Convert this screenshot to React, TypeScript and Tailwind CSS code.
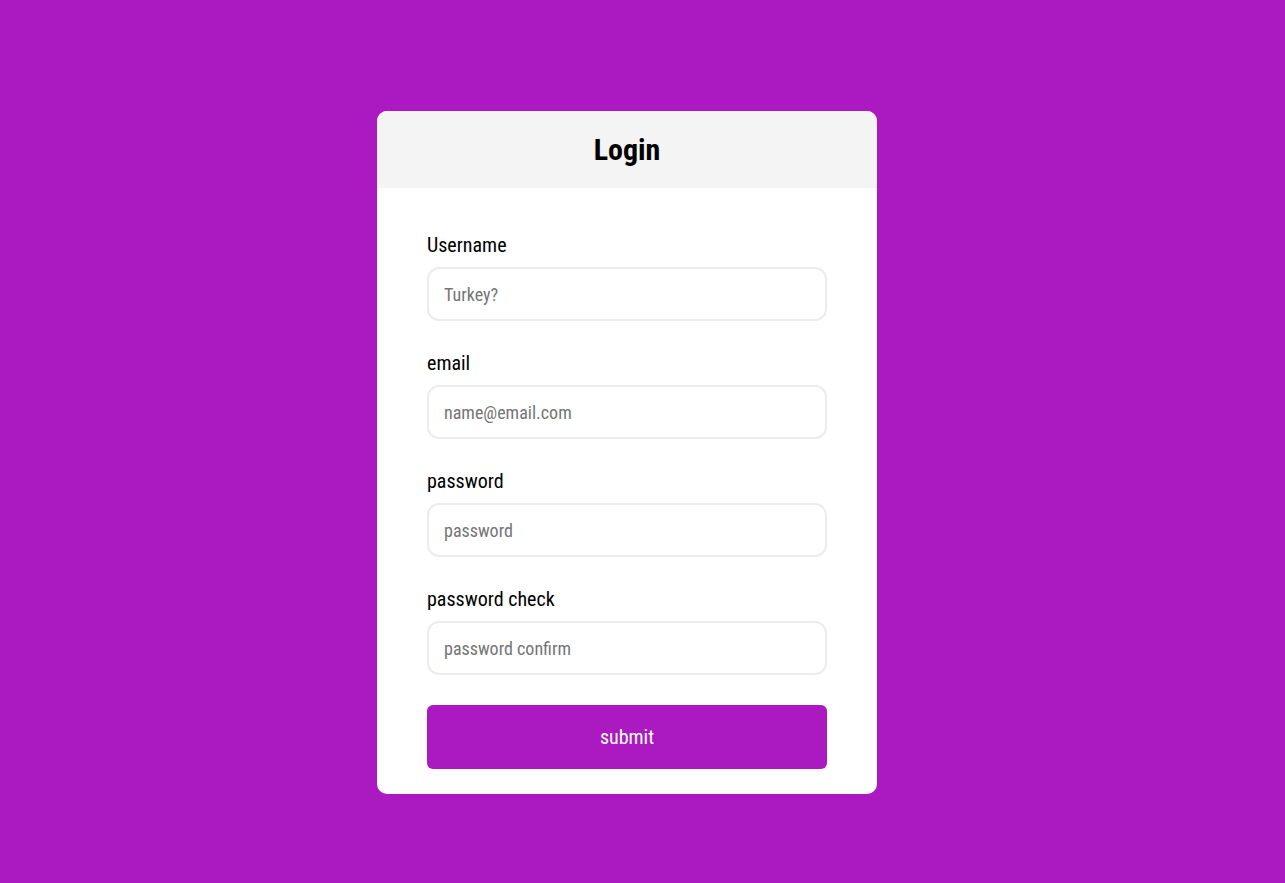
const FIELDS = [
  { label: 'Username', placeholder: 'Turkey?', type: 'text' },
  { label: 'email', placeholder: 'name@email.com', type: 'email' },
  { label: 'password', placeholder: 'password', type: 'password' },
  { label: 'password check', placeholder: 'password confirm', type: 'password' },
];

export default function App() {
  return (
    <div
      className="min-h-screen w-full bg-[#ab19c0] flex justify-center pt-[111px] pr-[31px]"
      style={{ fontFamily: '"Roboto Condensed", Roboto, "Liberation Sans", sans-serif' }}
    >
      <div className="w-[500px] h-[683px] bg-white rounded-[10px] overflow-hidden flex flex-col">
        <div className="h-[77px] bg-[#f4f4f4] flex items-center justify-center">
          <h1 className="text-[30px] font-bold text-black leading-none">Login</h1>
        </div>
        <form className="px-[50px] pt-[45px] flex flex-col" onSubmit={(e) => e.preventDefault()}>
          {FIELDS.map((f) => (
            <div key={f.label} className="flex flex-col mb-[30px]">
              <label className="text-[20px] leading-[24px] text-black mb-[10px]">{f.label}</label>
              <input
                type={f.type}
                placeholder={f.placeholder}
                className="h-[54px] w-full border-2 border-[#ececec] rounded-[12px] px-[15px] text-[18px] text-black placeholder:text-[#757575] outline-none"
              />
            </div>
          ))}
          <button
            type="submit"
            className="h-[64px] w-full rounded-[6px] bg-[#ab19c0] text-white text-[20px]"
          >
            submit
          </button>
        </form>
      </div>
    </div>
  );
}
